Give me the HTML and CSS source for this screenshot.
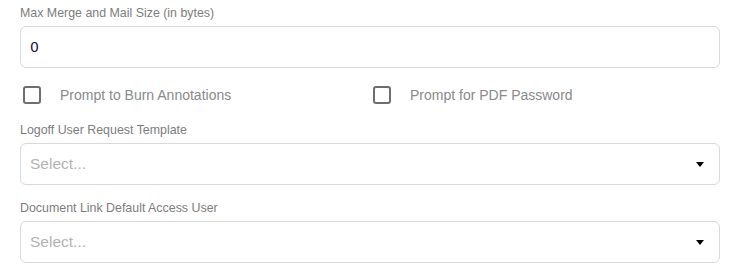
FILE: index.html
```html
<!DOCTYPE html>
<html>
<head>
<meta charset="utf-8">
<link rel="stylesheet" href="styles.css">
</head>
<body>
<div class="form">
  <div class="field">
    <label class="label">Max Merge and Mail Size (in bytes)</label>
    <div class="input"><span class="value">0</span></div>
  </div>
  <div class="checks">
    <div class="check"><span class="box"></span><span class="check-text">Prompt to Burn Annotations</span></div>
    <div class="check"><span class="box"></span><span class="check-text">Prompt for PDF Password</span></div>
  </div>
  <div class="field">
    <label class="label">Logoff User Request Template</label>
    <div class="input select"><span class="placeholder">Select...</span><span class="caret"></span></div>
  </div>
  <div class="field">
    <label class="label">Document Link Default Access User</label>
    <div class="input select"><span class="placeholder">Select...</span><span class="caret"></span></div>
  </div>
</div>
</body>
</html>
```
FILE: styles.css
```css
* { box-sizing: border-box; }
body {
  margin: 0;
  background: #fff;
  font-family: "Liberation Sans", Arial, sans-serif;
}
.form {
  width: 740px;
  padding: 6px 20px 0 20px;
  display: flex;
  flex-direction: column;
}
.field {
  display: flex;
  flex-direction: column;
}
.label {
  font-size: 12.4px;
  line-height: 14px;
  color: #7d7d7d;
  margin-bottom: 6px;
}
.input {
  height: 42px;
  border: 1px solid #d9d9d9;
  border-radius: 6px;
  display: flex;
  align-items: center;
  padding: 0 9px;
}
.value {
  font-family: "DejaVu Sans", sans-serif;
  font-size: 14px;
  color: #1f1440;
}
.placeholder {
  font-size: 15.5px;
  color: #b3b3b3;
  flex: 1;
}
.caret {
  width: 0;
  height: 0;
  border-left: 4px solid transparent;
  border-right: 4px solid transparent;
  border-top: 5px solid #000;
  margin-right: 6px;
}
.checks {
  display: grid;
  grid-template-columns: 350px 350px;
  height: 52px;
  align-items: center;
  margin-top: 1px;
  margin-bottom: 2px;
}
.check {
  display: flex;
  align-items: center;
  padding-left: 3px;
}
.box {
  width: 18px;
  height: 18px;
  border: 2px solid #6e6e6e;
  border-radius: 3px;
  margin-right: 19px;
}
.check-text {
  font-size: 14px;
  color: #8a8a8a;
}
.field + .field { margin-top: 16px; }
```
